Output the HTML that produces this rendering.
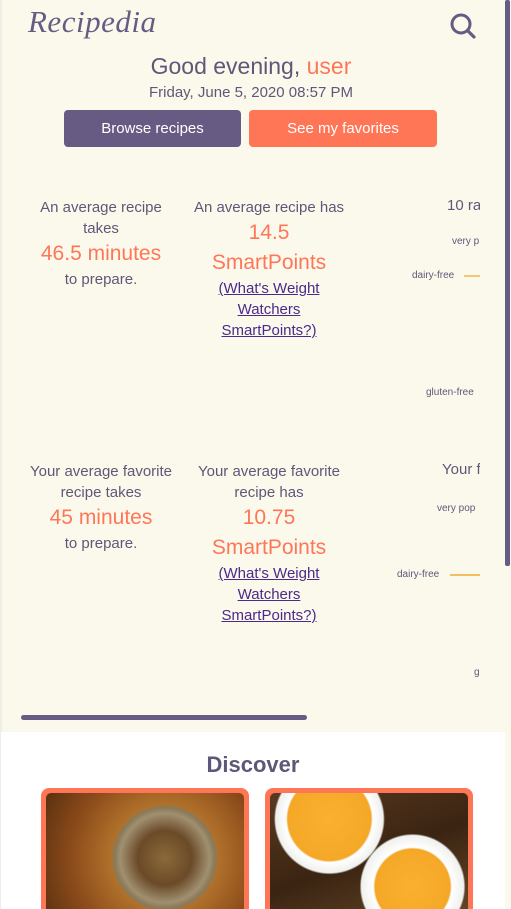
<!DOCTYPE html>
<html><head><meta charset="utf-8"><style>
*{margin:0;padding:0;box-sizing:border-box}
html,body{width:511px;height:909px;overflow:hidden}
body{background:#fbf9ec;font-family:"Liberation Sans","DejaVu Sans",sans-serif;color:#5e5878;position:relative}
.a{position:absolute}
.c{text-align:center}
.t{font-size:15px;line-height:21px}
.o{color:#ff7657}
.big{font-size:21px;line-height:30px;color:#ff7657}
a{color:#4a2a8a;text-decoration:underline}
.sm{font-size:10px;color:#5e5878}
</style></head><body>
<div class="a" style="left:0;top:0;width:2px;height:909px;background:#eeeee6"></div>
<div class="a" style="left:28px;top:4px;font-family:'Liberation Serif',serif;font-style:italic;font-size:31px;color:#675b83;letter-spacing:0.5px">Recipedia</div>
<svg class="a" style="left:449px;top:12px" width="28" height="28" viewBox="0 0 28 28"><circle cx="12" cy="12" r="9" fill="none" stroke="#675b83" stroke-width="3"/><line x1="19" y1="19" x2="25" y2="25" stroke="#675b83" stroke-width="3.2" stroke-linecap="round"/></svg>
<div class="a c" style="left:0;width:502px;top:53px;font-size:23px">Good evening, <span class="o">user</span></div>
<div class="a c" style="left:0;width:502px;top:84px;font-size:15px">Friday, June 5, 2020 08:57 PM</div>
<div class="a c" style="left:64px;top:110px;width:177px;height:37px;background:#675b83;border-radius:4px;color:#fff;font-size:15px;line-height:37px">Browse recipes</div>
<div class="a c" style="left:249px;top:110px;width:188px;height:37px;background:#ff7657;border-radius:4px;color:#fff;font-size:15px;line-height:37px">See my favorites</div>

<div class="a c t" style="left:28px;width:146px;top:197px">An average recipe takes<div class="big">46.5 minutes</div>to prepare.</div>
<div class="a c t" style="left:185px;width:168px;top:197px">An average recipe has<div class="big">14.5<br>SmartPoints</div><a>(What's Weight<br>Watchers<br>SmartPoints?)</a></div>
<div class="a" style="left:447px;top:197px;font-size:15px;width:33px;overflow:hidden;white-space:nowrap">10 ra</div>
<div class="a sm" style="left:452px;top:236px;width:28px;overflow:hidden;white-space:nowrap">very p</div>
<div class="a sm" style="left:412px;top:270px">dairy-free</div>
<div class="a" style="left:464px;top:275px;width:16px;height:2px;background:#f0c878"></div>
<div class="a sm" style="left:426px;top:387px">gluten-free</div>

<div class="a c t" style="left:24px;width:154px;top:461px">Your average favorite recipe takes<div class="big">45 minutes</div>to prepare.</div>
<div class="a c t" style="left:185px;width:168px;top:461px">Your average favorite recipe has<div class="big">10.75<br>SmartPoints</div><a>(What's Weight<br>Watchers<br>SmartPoints?)</a></div>
<div class="a" style="left:442px;top:461px;font-size:15px;width:38px;overflow:hidden;white-space:nowrap">Your f</div>
<div class="a sm" style="left:437px;top:503px;width:43px;overflow:hidden;white-space:nowrap">very pop</div>
<div class="a sm" style="left:397px;top:569px">dairy-free</div>
<div class="a" style="left:450px;top:574px;width:30px;height:2px;background:#f0c060"></div>
<div class="a sm" style="left:474px;top:667px">g</div>

<div class="a" style="left:505px;top:0;width:5px;height:566px;background:#675b83;border-radius:2px"></div>
<div class="a" style="left:21px;top:715px;width:286px;height:5px;background:#675b83;border-radius:3px"></div>

<div class="a" style="left:1px;top:732px;width:504px;height:177px;background:#fff"></div>
<div class="a c" style="left:0;width:506px;top:752px;font-size:22px;font-weight:bold;color:#5e5878">Discover</div>
<div class="a" style="left:41px;top:788px;width:208px;height:140px;background:#ff7657;border-radius:8px;padding:5px">
<div style="width:100%;height:100%;border-radius:5px;background:radial-gradient(circle at 60% 50%,#8a6a3a 0,#6b4a28 20%,#a09070 33%,#8a7a5a 37%,#b0702a 40%,#8a4a1a 70%,#5a3010 100%)"></div></div>
<div class="a" style="left:265px;top:788px;width:208px;height:140px;background:#ff7657;border-radius:8px;padding:5px">
<div style="width:100%;height:100%;border-radius:5px;background:radial-gradient(circle at 30% 20%,#fbb030 0,#f5a828 24%,#fff 25%,#f0f0ee 31%,transparent 32%),radial-gradient(circle at 72% 72%,#fbb030 0,#f5a828 22%,#fff 23%,#f0f0ee 30%,transparent 31%),linear-gradient(160deg,#5a3a20,#3a2412 50%,#6a4a2a)"></div></div>
</body></html>
